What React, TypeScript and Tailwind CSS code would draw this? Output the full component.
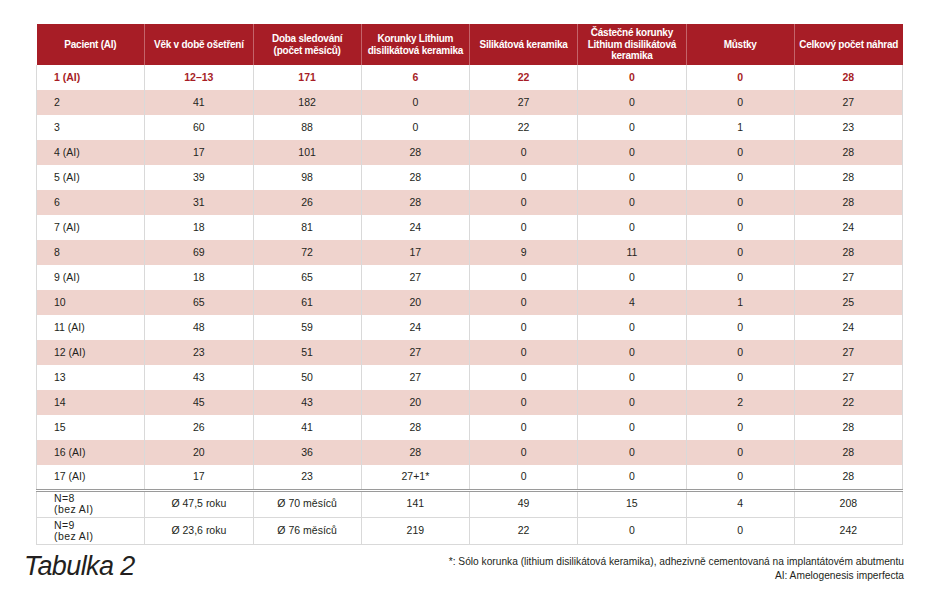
import React from "react";

type Row = {
  patient: string;
  age: string;
  months: string;
  crowns: string;
  silicate: string;
  partial: string;
  bridges: string;
  total: string;
};

const ROWS: Row[] = [
  { patient: "1 (AI)", age: "12–13", months: "171", crowns: "6", silicate: "22", partial: "0", bridges: "0", total: "28" },
  { patient: "2", age: "41", months: "182", crowns: "0", silicate: "27", partial: "0", bridges: "0", total: "27" },
  { patient: "3", age: "60", months: "88", crowns: "0", silicate: "22", partial: "0", bridges: "1", total: "23" },
  { patient: "4 (AI)", age: "17", months: "101", crowns: "28", silicate: "0", partial: "0", bridges: "0", total: "28" },
  { patient: "5 (AI)", age: "39", months: "98", crowns: "28", silicate: "0", partial: "0", bridges: "0", total: "28" },
  { patient: "6", age: "31", months: "26", crowns: "28", silicate: "0", partial: "0", bridges: "0", total: "28" },
  { patient: "7 (AI)", age: "18", months: "81", crowns: "24", silicate: "0", partial: "0", bridges: "0", total: "24" },
  { patient: "8", age: "69", months: "72", crowns: "17", silicate: "9", partial: "11", bridges: "0", total: "28" },
  { patient: "9 (AI)", age: "18", months: "65", crowns: "27", silicate: "0", partial: "0", bridges: "0", total: "27" },
  { patient: "10", age: "65", months: "61", crowns: "20", silicate: "0", partial: "4", bridges: "1", total: "25" },
  { patient: "11 (AI)", age: "48", months: "59", crowns: "24", silicate: "0", partial: "0", bridges: "0", total: "24" },
  { patient: "12 (AI)", age: "23", months: "51", crowns: "27", silicate: "0", partial: "0", bridges: "0", total: "27" },
  { patient: "13", age: "43", months: "50", crowns: "27", silicate: "0", partial: "0", bridges: "0", total: "27" },
  { patient: "14", age: "45", months: "43", crowns: "20", silicate: "0", partial: "0", bridges: "2", total: "22" },
  { patient: "15", age: "26", months: "41", crowns: "28", silicate: "0", partial: "0", bridges: "0", total: "28" },
  { patient: "16 (AI)", age: "20", months: "36", crowns: "28", silicate: "0", partial: "0", bridges: "0", total: "28" },
  { patient: "17 (AI)", age: "17", months: "23", crowns: "27+1*", silicate: "0", partial: "0", bridges: "0", total: "28" },
];

const SUMMARY = [
  { n: "N=8", age: "Ø 47,5 roku", months: "Ø 70 měsíců", crowns: "141", silicate: "49", partial: "15", bridges: "4", total: "208" },
  { n: "N=9", age: "Ø 23,6 roku", months: "Ø 76 měsíců", crowns: "219", silicate: "22", partial: "0", bridges: "0", total: "242" },
];

const HEADERS: React.ReactNode[] = [
  "Pacient (AI)",
  "Věk v době ošetření",
  <>Doba sledování<br />(počet měsíců)</>,
  <>Korunky Lithium<br />disilikátová keramika</>,
  "Silikátová keramika",
  <>Částečné korunky<br />Lithium disilikátová<br />keramika</>,
  "Můstky",
  "Celkový počet náhrad",
];

const cell = "border-l border-[#d9d9d9] text-center";

export default function App() {
  return (
    <div
      className="w-[940px] h-[600px] bg-white text-[#231f20]"
      style={{ fontFamily: "'Liberation Sans', Arial, sans-serif" }}
    >
      <div className="pt-[24px] pl-[36px] w-[904px]">
        <table className="w-[867px] table-fixed border-collapse text-[10.5px]">
          <thead>
            <tr className="h-[41px] bg-[#a71d26] text-white">
              {HEADERS.map((h, i) => (
                <th
                  key={i}
                  className={
                    "px-0.5 text-center align-middle text-[10px] font-bold leading-[11.5px] tracking-[-0.25px] whitespace-nowrap " +
                    (i > 0 ? "border-l border-[#c4646a]" : "")
                  }
                >
                  {h}
                </th>
              ))}
            </tr>
          </thead>
          <tbody>
            {ROWS.map((r, i) => (
              <tr
                key={r.patient}
                className={
                  "h-[25px] " +
                  (i % 2 === 1 ? "bg-[#efd3cd]" : "bg-white") +
                  (i === 0 ? " font-bold text-[#a71d26]" : "")
                }
              >
                <td className="border-l border-[#d9d9d9] pl-[17px] text-left">{r.patient}</td>
                <td className={cell}>{r.age}</td>
                <td className={cell}>{r.months}</td>
                <td className={cell}>{r.crowns}</td>
                <td className={cell}>{r.silicate}</td>
                <td className={cell}>{r.partial}</td>
                <td className={cell}>{r.bridges}</td>
                <td className={cell + " border-r"}>{r.total}</td>
              </tr>
            ))}
            {SUMMARY.map((s, i) => (
              <tr
                key={s.n}
                className={
                  "h-[27px] border-b border-[#d9d9d9] " +
                  (i === 0 ? "border-t-[3px] border-t-[#9a9a9a] [border-top-style:double]" : "")
                }
              >
                <td className="border-l border-[#d9d9d9] pl-[17px] text-left leading-[11px] tracking-[0.4px]">
                  {s.n}
                  <br />
                  (bez AI)
                </td>
                <td className={cell}>{s.age}</td>
                <td className={cell}>{s.months}</td>
                <td className={cell}>{s.crowns}</td>
                <td className={cell}>{s.silicate}</td>
                <td className={cell}>{s.partial}</td>
                <td className={cell}>{s.bridges}</td>
                <td className={cell + " border-r"}>{s.total}</td>
              </tr>
            ))}
          </tbody>
        </table>

        <div className="mt-[10px] ml-[-12px] flex items-start justify-between">
          <div className="mt-[-2px] text-[27px] italic leading-[27px] tracking-[-0.6px] text-[#231f20]">
            Tabulka 2
          </div>
          <div className="text-right text-[10.2px] leading-[14px]">
            <p>*: Sólo korunka (lithium disilikátová keramika), adhezivně cementovaná na implantátovém abutmentu</p>
            <p>AI: Amelogenesis imperfecta</p>
          </div>
        </div>
      </div>
    </div>
  );
}
